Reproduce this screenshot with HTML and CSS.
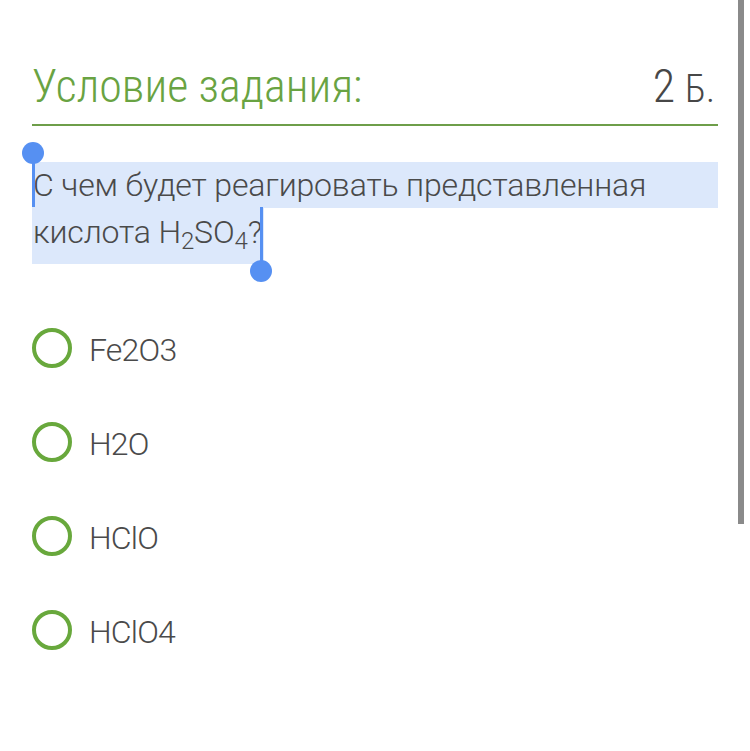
FILE: index.html
```html
<!DOCTYPE html>
<html lang="ru">
<head>
<meta charset="utf-8">
<link rel="stylesheet" href="styles.css">
</head>
<body>
<div class="page">
  <div class="header">
    <div class="title">Условие задания:</div>
    <div class="score"><span class="num">2</span><span class="unit">Б.</span></div>
  </div>
  <div class="question">
    <div class="sel line1">С чем будет реагировать представленная</div>
    <div class="sel line2">кислота H<sub>2</sub>SO<sub>4</sub>?</div>
    <div class="handle start"><span class="knob"></span><span class="bar"></span></div>
    <div class="handle end"><span class="bar"></span><span class="knob"></span></div>
  </div>
  <ul class="options">
    <li class="option"><span class="radio"></span><span class="label">Fe2O3</span></li>
    <li class="option"><span class="radio"></span><span class="label">H2O</span></li>
    <li class="option"><span class="radio"></span><span class="label">HClO</span></li>
    <li class="option"><span class="radio"></span><span class="label">HClO4</span></li>
  </ul>
</div>
<div class="scrollbar"></div>
</body>
</html>
```

FILE: styles.css
```css
html, body {
  margin: 0;
  padding: 0;
  background: #ffffff;
}
body {
  font-family: Roboto, "Noto Sans", sans-serif;
  font-weight: 300;
  color: #4a4a4a;
  width: 750px;
  height: 751px;
  overflow: hidden;
  position: relative;
}
.page {
  padding: 0 32px;
}
.header {
  display: flex;
  justify-content: space-between;
  align-items: baseline;
  padding-top: 59px;
  padding-bottom: 11px;
  border-bottom: 2px solid #6e9e4a;
}
.title {
  font-size: 46px;
  line-height: 54px;
  color: #69a342;
  font-stretch: 85%;
}
.score {
  color: #474747;
  padding-right: 3px;
  font-stretch: 85%;
}
.score .num {
  font-size: 46px;
  line-height: 54px;
}
.score .unit {
  font-size: 38px;
  margin-left: 10px;
}
.question {
  position: relative;
  margin-top: 36px;
  font-size: 32px;
  letter-spacing: -0.15px;
}
.sel {
  background: #dce8fb;
  white-space: nowrap;
}
.line1 {
  height: 46px;
  line-height: 46px;
  padding-left: 1px;
}
.line2 {
  display: inline-block;
  height: 56px;
  line-height: 48px;
  padding-left: 1px;
  padding-right: 2px;
  vertical-align: top;
}
.line2 sub {
  font-size: 24px;
  line-height: 0;
  vertical-align: -6px;
}
.handle {
  position: absolute;
  display: flex;
  flex-direction: column;
  align-items: center;
  width: 22px;
}
.handle .knob {
  width: 22px;
  height: 22px;
  border-radius: 50%;
  background: #5690f2;
}
.handle .bar {
  width: 3px;
  background: #5690f2;
}
.handle.start {
  left: -10px;
  top: -20px;
}
.handle.start .knob {
  margin-bottom: -11px;
}
.handle.start .bar {
  height: 54px;
}
.handle.end {
  left: 218px;
  top: 45px;
}
.handle.end .bar {
  height: 64px;
  margin-bottom: -11px;
}
.options {
  list-style: none;
  margin: 64px 0 0 0;
  padding: 0;
  display: flex;
  flex-direction: column;
  gap: 54px;
}
.option {
  display: flex;
  align-items: center;
  gap: 17px;
  height: 40px;
}
.radio {
  box-sizing: border-box;
  width: 40px;
  height: 40px;
  border: 4px solid #68a83c;
  border-radius: 50%;
  flex: none;
}
.label {
  font-size: 32px;
  line-height: 40px;
  padding-top: 4px;
  color: #4a4a4a;
  letter-spacing: -0.8px;
}
.scrollbar {
  position: absolute;
  left: 738px;
  top: 0;
  width: 6px;
  height: 524px;
  background: #8a8a8a;
}
```
